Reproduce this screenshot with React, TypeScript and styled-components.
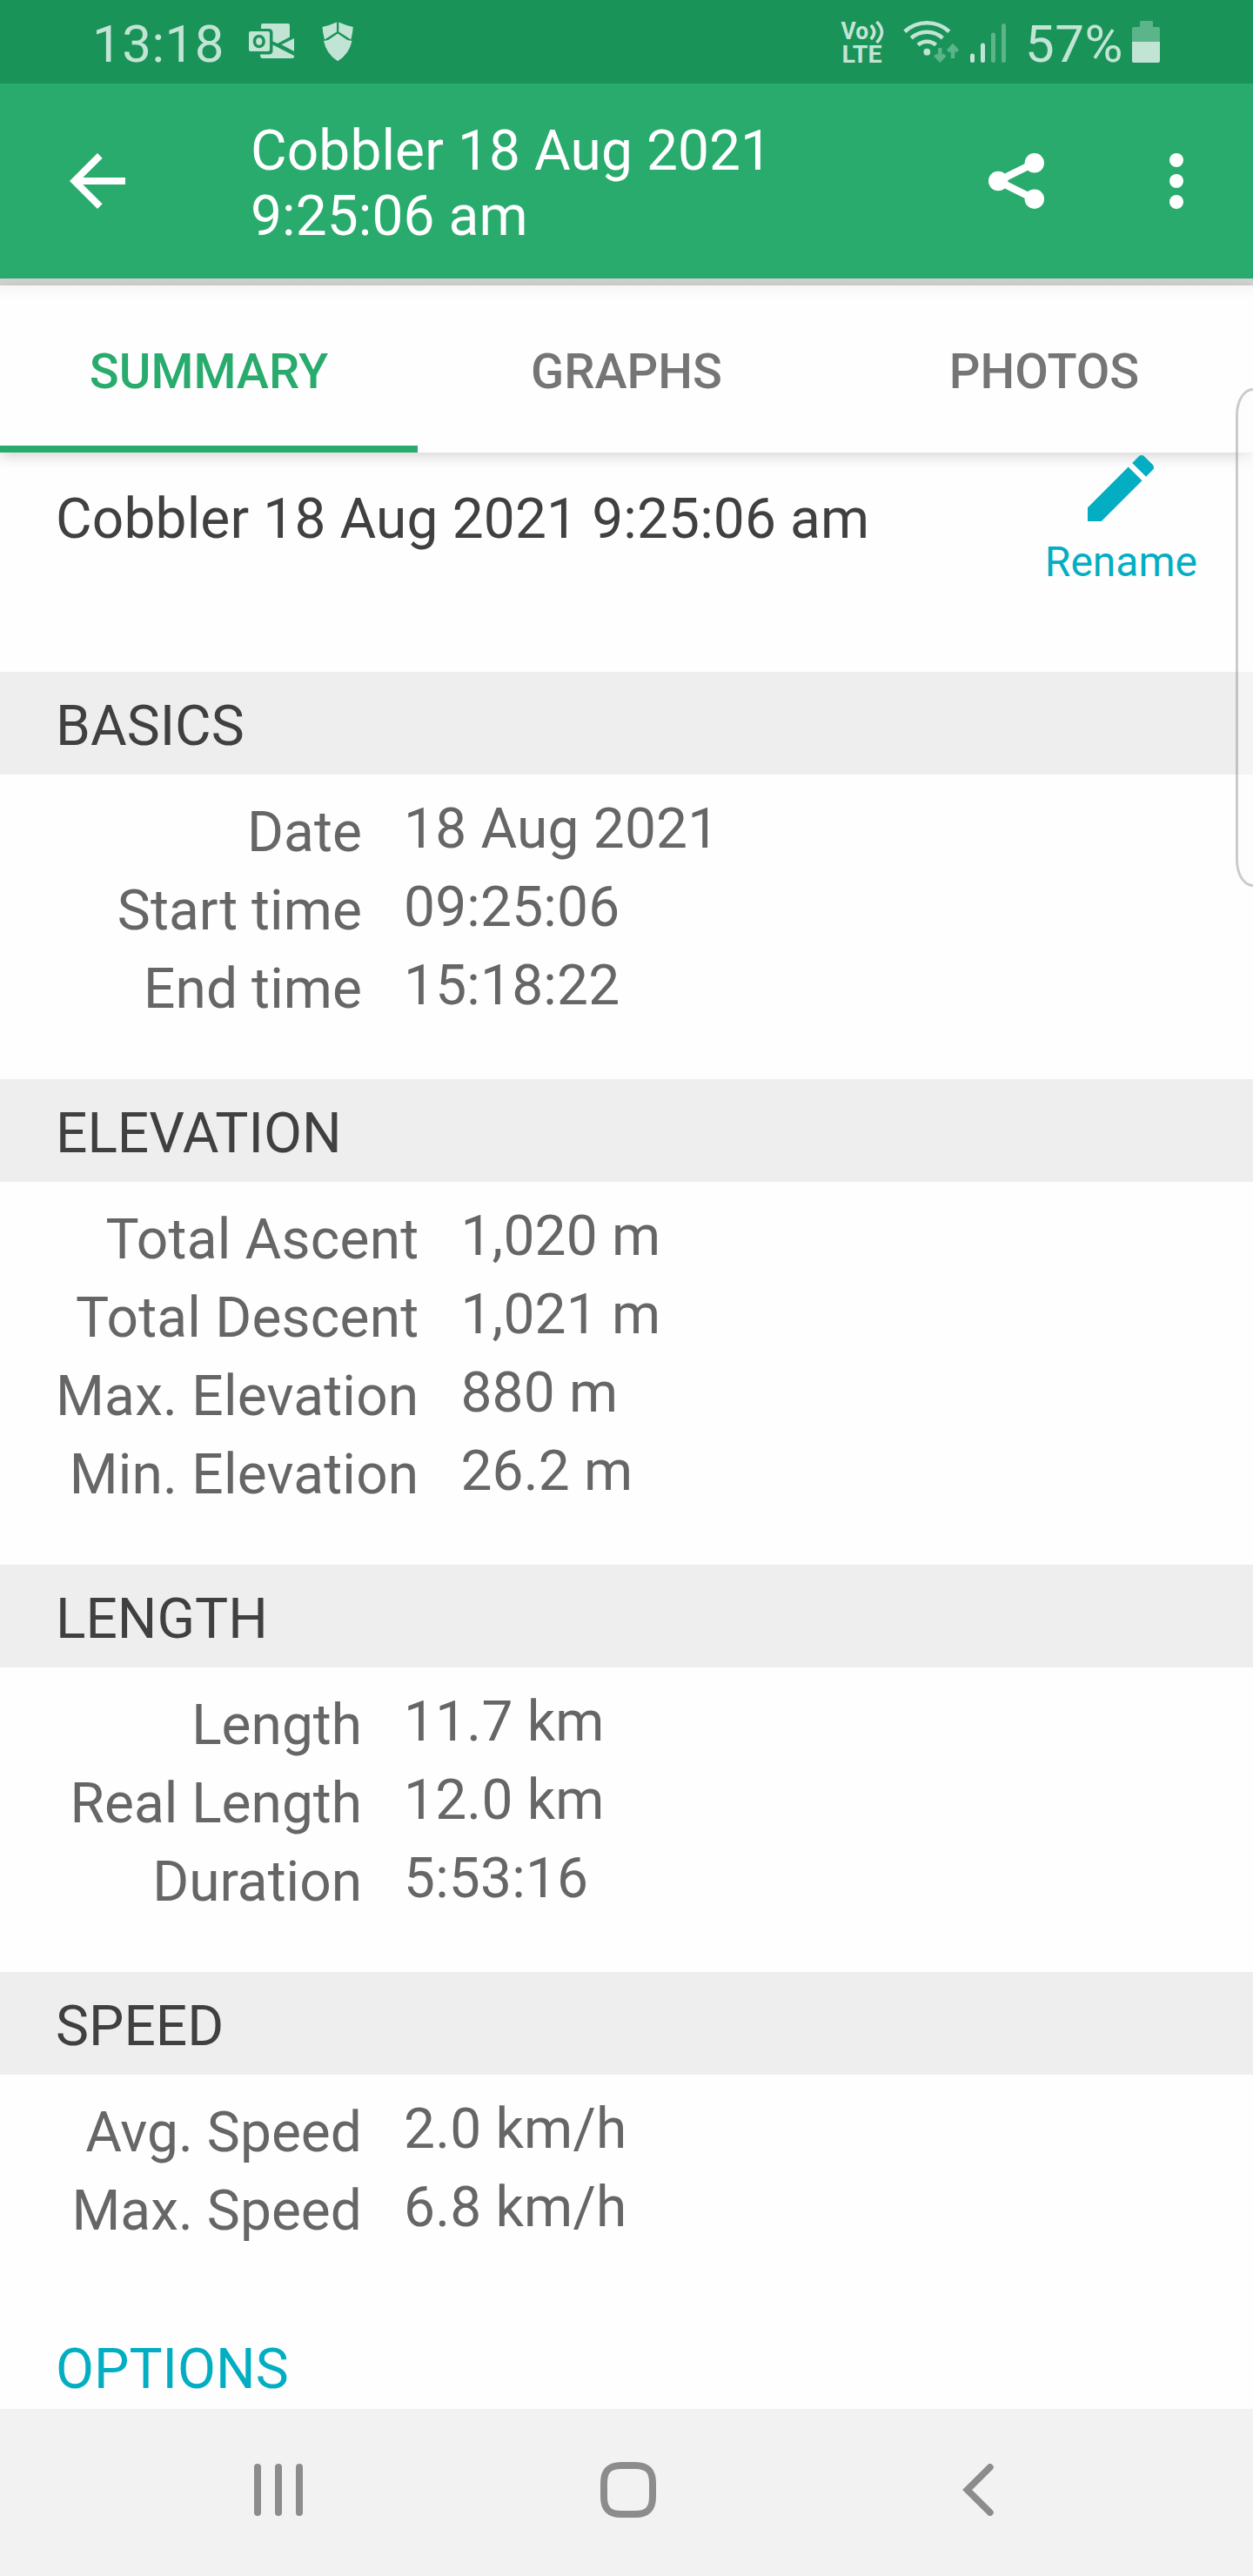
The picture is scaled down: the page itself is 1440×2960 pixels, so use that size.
import React from "react";
import styled, { createGlobalStyle } from "styled-components";

const GlobalStyle = createGlobalStyle`
  *, *::before, *::after { box-sizing: border-box; }
  body { margin: 0; background: #fefefe; }
  svg { display: block; flex: none; }
`;

const green = "#29ab6d";
const teal = "#04aec2";
const bright = "#c2e4d4";
const dim = "#5cb48a";

const Screen = styled.div`
  position: relative;
  display: flex;
  flex-direction: column;
  width: 1440px;
  height: 2960px;
  overflow: hidden;
  background: #fefefe;
  font-family: Roboto, "Liberation Sans", sans-serif;
  font-size: 64px;
  line-height: 75px;
  color: #404040;
`;

const StatusBar = styled.div`
  display: flex;
  flex: none;
  align-items: flex-start;
  justify-content: space-between;
  height: 96px;
  padding: 0 107px 0 106px;
  background: #1a9359;
  color: ${bright};
`;

const StatusText = styled.span<{ $width: number; $inset?: number }>`
  flex: none;
  width: ${(p) => p.$width}px;
  padding: 16px 0 0 ${(p) => p.$inset ?? 0}px;
  font-size: 60px;
  line-height: 70px;
  letter-spacing: 0.5px;
  white-space: nowrap;
`;

const StatusGroup = styled.div`
  display: flex;
  align-items: flex-start;
`;

const AppBar = styled.header`
  display: flex;
  flex: none;
  align-items: center;
  height: 224px;
  padding: 0 40px 0 64px;
  background: ${green};
  color: #fff;
`;

const IconButton = styled.button<{ $left?: number }>`
  display: flex;
  flex: none;
  border: 0;
  padding: 0;
  margin-left: ${(p) => p.$left ?? 0}px;
  background: none;
  color: inherit;
`;

const AppTitle = styled.h1`
  width: 640px;
  margin: 0 0 0 128px;
  padding-top: 6px;
  font-size: 64px;
  font-weight: 400;
  line-height: 75px;
  letter-spacing: 0.1px;
`;

const Divider = styled.div`
  flex: none;
  height: 8px;
  background: #d3d3d3;
`;

const Tabs = styled.nav`
  position: relative;
  z-index: 1;
  display: grid;
  flex: none;
  grid-template-columns: repeat(3, 1fr);
  height: 192px;
  background: linear-gradient(#f6f6f6, #fefefe 16px);
  box-shadow: 0 4px 16px rgba(0, 0, 0, 0.17);
`;

const Tab = styled.div<{ $active?: boolean }>`
  display: flex;
  align-items: center;
  justify-content: center;
  padding-top: 14px;
  border-bottom: 8px solid ${(p) => (p.$active ? green : "transparent")};
  color: ${(p) => (p.$active ? green : "#757575")};
  font-size: 56px;
  font-weight: 500;
  line-height: 66px;
`;

const Content = styled.main`
  display: flex;
  flex: 1;
  flex-direction: column;
  min-height: 0;
  overflow: hidden;
`;

const TrackHeader = styled.div`
  display: flex;
  flex: none;
  justify-content: space-between;
  height: 252px;
  padding: 0 64px;
`;

const TrackName = styled.div`
  padding-top: 39px;
  letter-spacing: 0.15px;
`;

const Rename = styled.button`
  position: relative;
  z-index: 2;
  display: flex;
  flex-direction: column;
  align-items: center;
  align-self: flex-start;
  border: 0;
  padding: 0;
  background: none;
  color: ${teal};
  font: 400 48px/56px Roboto, "Liberation Sans", sans-serif;
  svg { margin-bottom: 19px; }
`;

const SectionTitle = styled.h2`
  height: 118px;
  margin: 0;
  padding: 25px 64px 0;
  background: #eee;
  font-size: 64px;
  font-weight: 400;
  line-height: 75px;
`;

const Details = styled.dl`
  display: grid;
  grid-template-columns: minmax(352px, max-content) 1fr;
  grid-auto-rows: 90px;
  column-gap: 48px;
  margin: 0;
  padding: 25px 64px 55px;
  color: #666;
  letter-spacing: 0.2px;
`;

const Label = styled.dt<{ $tracking: number }>`
  padding-top: 4px;
  text-align: right;
  letter-spacing: ${(p) => p.$tracking}px;
`;

const Value = styled.dd`
  margin: 0;
`;

const Options = styled.div`
  padding: 41px 64px 0;
  color: ${teal};
`;

const EdgeHandle = styled.div`
  position: absolute;
  z-index: 3;
  top: 446px;
  right: -20px;
  width: 40px;
  height: 573px;
  border: 3px solid rgba(0, 0, 0, 0.2);
  border-radius: 21px / 32px;
  background: rgba(252, 252, 252, 0.4);
`;

const NavBar = styled.footer`
  display: flex;
  flex: none;
  align-items: center;
  justify-content: space-between;
  height: 192px;
  padding: 0 298px 6px 292px;
  background: #f2f2f2;
  svg:nth-child(2) { margin-left: -10px; }
`;

const sections: { title: string; tracking: number; rows: [string, string][] }[] = [
  {
    title: "BASICS",
    tracking: 0.08,
    rows: [
      ["Date", "18 Aug 2021"],
      ["Start time", "09:25:06"],
      ["End time", "15:18:22"],
    ],
  },
  {
    title: "ELEVATION",
    tracking: 0.22,
    rows: [
      ["Total Ascent", "1,020 m"],
      ["Total Descent", "1,021 m"],
      ["Max. Elevation", "880 m"],
      ["Min. Elevation", "26.2 m"],
    ],
  },
  {
    title: "LENGTH",
    tracking: 0,
    rows: [
      ["Length", "11.7 km"],
      ["Real Length", "12.0 km"],
      ["Duration", "5:53:16"],
    ],
  },
  {
    title: "SPEED",
    tracking: 0.05,
    rows: [
      ["Avg. Speed", "2.0 km/h"],
      ["Max. Speed", "6.8 km/h"],
    ],
  },
];

const NotificationIcons = () => (
  <svg width="122" height="96" viewBox="285 0 122 96" fill={bright}>
    <path d="M302 27h29a2 2 0 0 1 2 2v13.500l-14 7.500-1-.6-4.500-2V38q0-5-5-5H300v-4a2 2 0 0 1 2-2Z" />
    <path d="M338 44v15l-14.500-7.800Z" />
    <path d="M313.500 51.500 338 64v1a2 2 0 0 1-2 2h-34.500q-2.500 0-2.500-4.500h10q4.500 0 4.500-4.500Z" />
    <path
      fillRule="evenodd"
      d="M288 36h20q2 0 2 2v19q0 2-2 2h-20q-2 0-2-2V38q0-2 2-2Zm9.800 4c-4.300 0-7 3.300-7 7.600s2.700 7.600 7 7.600 7-3.300 7-7.600-2.700-7.600-7-7.600Zm0 3.200c2.300 0 3.600 1.800 3.600 4.400s-1.300 4.400-3.600 4.400-3.600-1.800-3.600-4.400 1.300-4.400 3.600-4.400Z"
    />
    <path d="M387 25.500v11L373 45.500q-2-7-2.500-14.500Q378 29.500 387 25.500Z" />
    <path d="M389.300 25.500v11l14 9q2-7 2.500-14.500Q398 29.500 389.300 25.500Z" />
    <path d="m388.200 38.500 11 7.500 5.300 1q-3 15-16.300 23.200Q375 62 372 47l5.200-1Z" />
  </svg>
);

const NetworkIcons = () => (
  <svg width="191" height="96" viewBox="966 0 191 96" fill={bright}>
    <g fontFamily="Roboto, sans-serif" fontWeight="700" fontSize="28">
      <text x="966.500" y="45" textLength="31.500" lengthAdjust="spacingAndGlyphs">Vo</text>
      <text x="967.500" y="71.800" textLength="46" lengthAdjust="spacingAndGlyphs">LTE</text>
    </g>
    <g fill="none" stroke={bright} strokeWidth="3.600">
      <path d="M1000.800 29q7.800 8 0 16" />
      <path d="M1007.500 25q12 11.500 0 24" />
    </g>
    <g fill="none" stroke={bright} strokeWidth="4.600">
      <path d="M1039.800 36.200a37.500 37.500 0 0 1 51 0" />
      <path d="M1047.300 43.800a26.500 26.500 0 0 1 36 0" />
      <path d="M1055 51.600a15.500 15.500 0 0 1 20.600 0" />
    </g>
    <circle cx="1065.300" cy="59.700" r="3.900" />
    <g fill="none" stroke={dim} strokeWidth="4.400">
      <path d="M1080.300 55v14M1074.800 63l5.500 6 5.500-6" />
      <path d="M1095 67V53M1089.500 59l5.500-6 5.500 6" />
    </g>
    <rect x="1115" y="61.500" width="5" height="10.500" rx="2.500" />
    <rect x="1127" y="49.500" width="5" height="22.500" rx="2.500" />
    <rect x="1139" y="37.500" width="5" height="34.500" rx="2.500" fill={dim} />
    <rect x="1151" y="27" width="5" height="45" rx="2.500" fill={dim} />
  </svg>
);

const BatteryIcon = () => (
  <svg width="32" height="96" viewBox="0 0 32 96">
    <path d="M9 25q0-1 1-1h13q1 0 1 1v6h6q2 0 2 2v15H0V33q0-2 2-2h7Z" fill={dim} />
    <path d="M0 48h32v22q0 2-2 2H2q-2 0-2-2Z" fill={bright} />
  </svg>
);

export default function App() {
  return (
    <>
      <GlobalStyle />
      <Screen>
        <StatusBar>
          <StatusGroup>
            <StatusText $width={179}>13:18</StatusText>
            <NotificationIcons />
          </StatusGroup>
          <StatusGroup>
            <NetworkIcons />
            <StatusText $width={144} $inset={21}>57%</StatusText>
            <BatteryIcon />
          </StatusGroup>
        </StatusBar>

        <AppBar>
          <IconButton aria-label="Back">
            <svg width="96" height="96" viewBox="0 0 24 24" fill="#fff">
              <path d="M20 11H7.830l5.590-5.590L12 4l-8 8 8 8 1.410-1.410L7.830 13H20v-2z" />
            </svg>
          </IconButton>
          <AppTitle>Cobbler 18 Aug 2021 9:25:06 am</AppTitle>
          <IconButton $left={192} aria-label="Share">
            <svg width="96" height="96" viewBox="0 0 96 96" fill="#fff">
              <path d="M68.800 27.300 27.200 48l41.600 20.700" fill="none" stroke="#fff" strokeWidth="8.500" />
              <circle cx="27.200" cy="48" r="11.200" />
              <circle cx="68.800" cy="27.300" r="11.200" />
              <circle cx="68.800" cy="68.700" r="11.200" />
            </svg>
          </IconButton>
          <IconButton $left={88} aria-label="More">
            <svg width="96" height="96" viewBox="0 0 96 96" fill="#fff">
              <circle cx="48" cy="24" r="8" />
              <circle cx="48" cy="48" r="8" />
              <circle cx="48" cy="72" r="8" />
            </svg>
          </IconButton>
        </AppBar>
        <Divider />
        <Tabs>
          <Tab $active>SUMMARY</Tab>
          <Tab>GRAPHS</Tab>
          <Tab>PHOTOS</Tab>
        </Tabs>

        <Content>
          <TrackHeader>
            <TrackName>Cobbler 18 Aug 2021 9:25:06 am</TrackName>
            <Rename>
              <svg width="76" height="79" viewBox="0 -3 76 79" fill={teal}>
                <path
                  transform="scale(4.222) translate(-3 -3)"
                  d="M3 17.250V21h3.750L17.810 9.940l-3.750-3.750L3 17.250zM20.710 7.040c.39-.39.39-1.020 0-1.410l-2.340-2.340c-.39-.39-1.020-.39-1.410 0l-1.830 1.830 3.750 3.750 1.830-1.830z"
                />
              </svg>
              Rename
            </Rename>
          </TrackHeader>

          {sections.map((section) => (
            <section key={section.title}>
              <SectionTitle>{section.title}</SectionTitle>
              <Details>
                {section.rows.map(([label, value]) => (
                  <React.Fragment key={label}>
                    <Label $tracking={section.tracking}>{label}</Label>
                    <Value>{value}</Value>
                  </React.Fragment>
                ))}
              </Details>
            </section>
          ))}
          <Options>OPTIONS</Options>
        </Content>

        <NavBar>
          <svg width="56" height="60" viewBox="0 0 56 60" fill="#8c8c8c">
            <rect width="8" height="60" rx="4" />
            <rect x="24" width="8" height="60" rx="4" />
            <rect x="48" width="8" height="60" rx="4" />
          </svg>
          <svg width="64" height="64" viewBox="0 0 64 64" fill="none" stroke="#8c8c8c" strokeWidth="8">
            <path d="M24 4h16c14 0 20 6 20 20v16c0 14-6 20-20 20H24C10 60 4 54 4 40V24C4 10 10 4 24 4Z" />
          </svg>
          <svg width="36" height="60" viewBox="0 0 36 60" fill="none" stroke="#8c8c8c" strokeWidth="7.800" strokeLinecap="round">
            <path d="M31.800 4 5.600 30l26.200 26" />
          </svg>
        </NavBar>

        <EdgeHandle />
      </Screen>
    </>
  );
}
